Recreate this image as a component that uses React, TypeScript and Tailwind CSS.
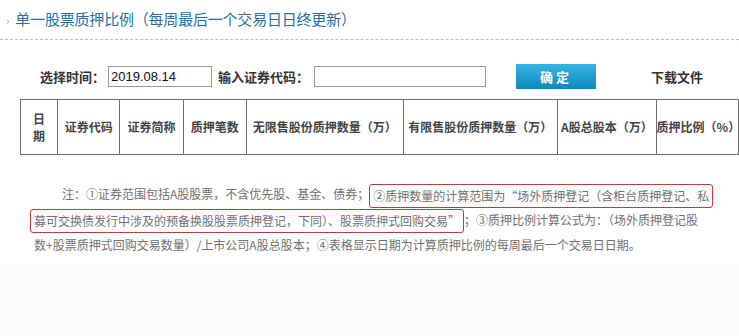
import React from 'react';

const cjk = { fontFamily: '"Noto Sans CJK SC", "Liberation Sans", sans-serif' };

const columns = [
  { label: '日期', w: 'w-[37px]', stacked: true },
  { label: '证券代码', w: 'w-[62px]' },
  { label: '证券简称', w: 'w-[63px]' },
  { label: '质押笔数', w: 'w-[63px]' },
  { label: '无限售股份质押数量（万）', w: 'w-[156px]' },
  { label: '有限售股份质押数量（万）', w: 'w-[154px]' },
  { label: 'A股总股本（万）', w: 'w-[98px]' },
  { label: '质押比例（%）', w: 'w-[82px]' },
];

function RedBox({ children }: { children: React.ReactNode }) {
  return (
    <span className="inline-block h-[24px] leading-[22px] px-[3px] border border-[#c0393b] rounded-[3px] align-middle">
      {children}
    </span>
  );
}

export default function App() {
  return (
    <div className="w-[739px] h-[336px] flex flex-col bg-[#fafafa] overflow-hidden" style={cjk}>
      <div className="bg-white h-[265px] flex flex-col">
        {/* Title */}
        <div className="h-[40px] flex items-center border-b border-dashed border-[#aebfcc] pl-[6px]">
          <span className="text-[11px] text-[#8aa6bb] mr-[6px] mt-[1px]">›</span>
          <span className="text-[15px] text-[#2a6f9f] tracking-[-0.2px]">单一股票质押比例（每周最后一个交易日日终更新）</span>
        </div>

        {/* Filters */}
        <div className="flex items-center mt-[24px] h-[25px] pl-[40px] text-[13px] font-bold text-[#333]">
          <span className="w-[68px]">选择时间：</span>
          <div
            className="w-[104px] h-[21px] border border-[#9a9a9a] flex items-center pl-[2px] text-[13px] font-normal text-[#111]"
            style={{ fontFamily: '"Liberation Sans", Arial, sans-serif' }}
          >
            2019.08.14
          </div>
          <span className="ml-[6px] w-[96px]">输入证券代码：</span>
          <div className="w-[172px] h-[21px] border border-[#9a9a9a]" />
          <button className="ml-[30px] w-[80px] h-[25px] bg-gradient-to-b from-[#36b6e2] to-[#0b88bd] text-white text-[13px] font-bold tracking-[3px]">
            确定
          </button>
          <span className="ml-[55px]">下载文件</span>
        </div>

        {/* Table header */}
        <table className="mt-[10px] ml-[20px] border-collapse text-[12px] font-bold text-[#444]">
          <thead>
            <tr className="h-[55px]">
              {columns.map((c) => (
                <th key={c.label} className={`${c.w} border border-[#6b6b6b] text-center font-bold p-0`}>
                  {c.stacked ? (
                    <div className="flex flex-col items-center">
                      <span className="leading-[17px]">日</span>
                      <span className="leading-[17px]">期</span>
                    </div>
                  ) : (
                    c.label
                  )}
                </th>
              ))}
            </tr>
          </thead>
        </table>

        {/* Notes */}
        <div className="mt-[27px] text-[12px] text-[#707070] leading-[24.5px]">
          <div className="pl-[62px] whitespace-nowrap">
            注：①证券范围包括A股股票，不含优先股、基金、债券；
            <RedBox>②质押数量的计算范围为“场外质押登记（含柜台质押登记、私</RedBox>
          </div>
          <div className="pl-[30px] whitespace-nowrap">
            <RedBox>募可交换债发行中涉及的预备换股股票质押登记，下同）、股票质押式回购交易”</RedBox>
            ；③质押比例计算公式为：（场外质押登记股
          </div>
          <div className="pl-[34px] whitespace-nowrap">
            数+股票质押式回购交易数量）/上市公司A股总股本；④表格显示日期为计算质押比例的每周最后一个交易日日期。
          </div>
        </div>
      </div>
    </div>
  );
}
